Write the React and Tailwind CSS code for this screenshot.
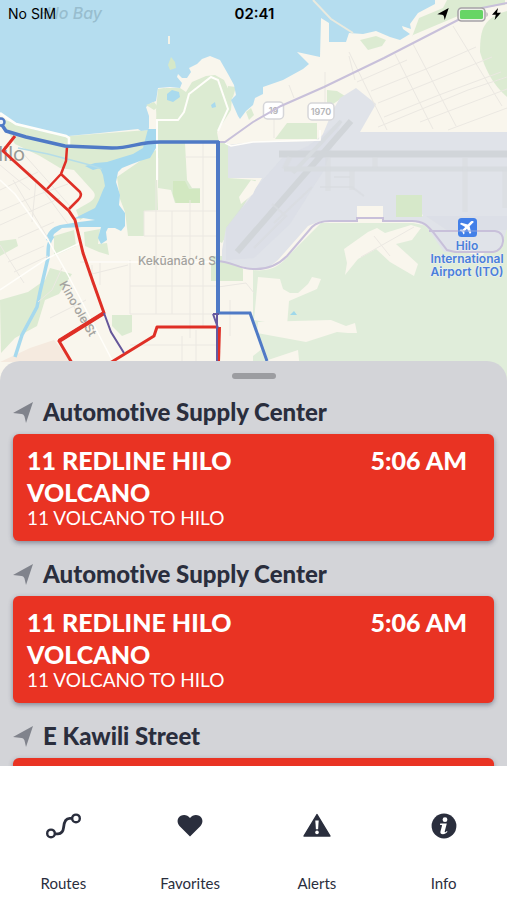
import React, { useState } from "react";

const STOPS = [
  {
    id: 1,
    stop: "Automotive Supply Center",
    route: "11 REDLINE HILO VOLCANO",
    headsign: "11 VOLCANO TO HILO",
    time: "5:06 AM",
  },
  {
    id: 2,
    stop: "Automotive Supply Center",
    route: "11 REDLINE HILO VOLCANO",
    headsign: "11 VOLCANO TO HILO",
    time: "5:06 AM",
  },
  {
    id: 3,
    stop: "E Kawili Street",
    route: "11 REDLINE HILO VOLCANO",
    headsign: "11 VOLCANO TO HILO",
    time: "5:08 AM",
  },
];

const ArrowIcon = ({ className }) => (
  <svg className={className} viewBox="0 0 20 21" fill="currentColor" aria-hidden="true">
    <path d="M20 0L0 11l8.500 1c1.500.2 2.700 1.200 3 2.600L13 21z" />
  </svg>
);

const RoutesIcon = () => (
  <svg width="36" height="32" viewBox="0 0 36 32" fill="none" stroke="currentColor" strokeWidth="2.4">
    <circle cx="6" cy="23.4" r="3.8" />
    <circle cx="31" cy="8.4" r="3.8" />
    <path d="M9.800 23.800h3.200c4.200 0 5.200-2.600 5.600-6.400.5-5.400 1.800-9 6-9h2.600" strokeWidth="2.800" />
  </svg>
);

const HeartIcon = () => (
  <svg width="26" height="32" viewBox="0 0 26 32" fill="currentColor">
    <path d="M13 26.400L2.500 16C-.6 12.500.2 7.400 3.800 5.700 7 4.200 10.700 4.900 13 8c2.300-3.100 6-3.800 9.200-2.300 3.600 1.700 4.400 6.800 1.300 10.300z" />
  </svg>
);

const AlertIcon = () => (
  <svg width="28" height="32" viewBox="0 0 28 32">
    <path d="M14 4.600L27 26H1z" fill="currentColor" stroke="currentColor" strokeWidth="1.400" strokeLinejoin="round" />
    <path d="M12.300 10.400h3.400l-.6 8.900h-2.200z" fill="#fff" />
    <circle cx="14" cy="22.400" r="1.800" fill="#fff" />
  </svg>
);

const InfoIcon = () => (
  <svg width="26" height="32" viewBox="0 0 26 32">
    <circle cx="13" cy="16" r="12.400" fill="currentColor" />
    <circle cx="14" cy="9.700" r="2.400" fill="#fff" />
    <path d="M9.200 13.400h6.600l-2.100 8c-.2.900.5.900 1.100.5l1-.8.700.7c-1.200 1.400-2.900 2.400-4.600 2.400-2 0-2.900-1.100-2.400-2.900l1.500-5.600c.1-.6-.1-.8-.7-.8H9z" fill="#fff" />
  </svg>
);

const TABS = [
  { label: "Routes", icon: <RoutesIcon /> },
  { label: "Favorites", icon: <HeartIcon /> },
  { label: "Alerts", icon: <AlertIcon /> },
  { label: "Info", icon: <InfoIcon /> },
];

const MapView = () => (
  <svg
    className="block h-full w-full"
    viewBox="0 0 507 381"
    preserveAspectRatio="xMidYMin slice"
    role="img"
    aria-label="Map of Hilo"
    fontFamily='Inter, "Liberation Sans", sans-serif'
  >
    <rect width="507" height="381" fill="#f9f6ed" />

    {/* Parks and forest */}
    <g fill="#dcebd2">
      <path d="M0 118l16 6 52 12 80-6v20l-43 15 7 25-12 18-20 12-4-10 14-8c6-4 6-8 2-12l-18-20-14-2-20-12-25-12z" />
      <path d="M156 150l2 60-14 1v25l-16 0-3-24-5-13-3-22z" />
      <path d="M156 120l1-10 9-22h14l6 4 6-10 14-6 9-1 9 5 8 17-1 13-14 22 2 11h-62z" />
      <path d="M158 143h27l2 37 5 8h8v15h-25l-4-13-13-2z" />
      <path d="M220 143h8l0 35 28 2-8 18-26 45-2-1z" />
      <path d="M228 86l8 1-3 10-5 5z" />
      <path d="M246 112l5-4 3 7-5 5z" />
      <path d="M412 37l7-19 24-10 4-8h32l26 0v5l-28 3-38 16-26 11z" />
      <path d="M480 52c0-24 4-34 27-41v86c-14-12-22-28-27-45z" />
      <path d="M287 123h30v16h-42z" />
      <path d="M327 90l10 1 8 5-18 12z" />
      <path d="M360 40l16-4 10 4-4 6-14 4z" />
      <path d="M211 256h20l12 13v12h-32z" />
      <path d="M0 300l28-8 17-12 5-12 22 6-13 20-14 6-8 26-22 12-14 15z" />
      <path d="M0 241l16-2 2 7-18 10z" />
      <path d="M112 315h20v17l-10 4-10-10z" />
      <path d="M54 236l20-6 2 16-22 10z" />
      <path d="M84 232l16-3-2 15 9-1 2 12-10-3-14-6z" />
    </g>
    <path fill="#d2e8c1" d="M173 181h12l4 8h11v14h-24l-3-8z" />
    <path fill="#f5eadf" d="M0 362l30-14 24-8 18 22z" />

    {/* Forest south of the airport */}
    <path
      fill="#e0edda"
      d="M253 270c18 2 27-4 36-15l32-32h92l25 5 24 24 20 4 25-30v155H253v-25l10-8-10-23z"
    />
    <g fill="#f9f6ed">
      <path d="M258 277l22 2 3 10 7 4 8 0 10-9 4-7 9 2-4 10-28 12-2 25-33-6z" />
      <path d="M258 322l73-2 15 6 9-3 2 10-9 0-11-1-31 10-49-9z" />
      <path d="M265 361l33-11 2 20h-40z" />
      <path d="M344 249l24-17 9-4 8 5 26-8 10 3-9 12-16 4 22 20-4 12-24-14-14-13-18 10-13 16 2-12z" />
    </g>
    <path fill="#9fd8ea" d="M290 315l4-4 3 4z" />

    {/* Airport */}
    <path
      fill="#e0e3e9"
      d="M228 145L253 142L320 141L333 110L340 98L356 88L376 104L360 132H507V228L502 246L495 252H444L426 226L413 221H320L308 226L278 260L268 268L253 269L222 261V250L226 228L250 198L262 178H228Z"
    />
    <path fill="#d8dce6" fillOpacity=".5" d="M226 228l28-38 28-32 26-12 34-26-18 50-34 54-36 34-28 2zM426 216h81v14h-60z" />
    <path fill="#f9f6ed" d="M239 197l12-17 7 2-5 12-12 10zM357 206h26v16h-26zM418 215l3-3 2 4z" />
    <path fill="#d6e8c9" d="M396 195h26v22h-26z" />
    <g stroke="#d1d5d9" fill="none">
      <path d="M279 154h228" strokeWidth="7" />
      <path d="M351 121L237 252" strokeWidth="6" />
      <g stroke="#d8dce0">
        <path d="M284 169h223" strokeWidth="5" />
        <path d="M341 121l-48 52" strokeWidth="4" />
        <path d="M375 157v11M465 158v54M505 170v38M290 157l-6 12M328 157v34M352 170v20" strokeWidth="5" strokeOpacity=".6" />
        <path d="M334 177h16M320 187h32l12 9M312 187l-38 36M272 204l14 12-32 32" strokeWidth="2" strokeOpacity=".7" />
      </g>
    </g>

    {/* Ocean */}
    <path
      fill="#b5ddef"
      d="M0 0v114l16 10 19 6 33 6 32-3 38-4 3 2 7-1 1-2v-12l-3-9 5-4 5-2 2-13 12-1 10 1 2-5-5-6 1-3 4 4h5l4-6-2-4 8-4 5-5 8-3 10 4 8 14 6 11 2 10-5 5 7 16 2 3 6-8 7-6 2-7 8-4v-7l20-7 20-11 6-5-12-12 23 5 1-39 8 5v19h17l3-9 14 1 13-3 14 6 10 3 10-6-7-5-1-3 9 3-1-5 8-11 17-9V0z"
    />
    <path fill="#f5f3e8" d="M168 36h2v8h-2z" />
    <path fill="#d5e8c8" d="M171 57l4 5 1 6-6 2-2-5z" />
    <g fill="#dcebd2">
      <path d="M158 89l6-1 16 2 4 10-5 19h-22l-1-9z" />
      <path d="M146 105l8-3 4 5-4 3z" />
    </g>
    <g fill="#a9daee">
      <path d="M167 94l5-4 7 2 1 5-7 5-6-2zM211 105l4-3 1 5-4 1z" />
    </g>

    {/* Wailoa river and pond */}
    <path
      fill="#a6d9ee"
      d="M148 129h8v19l-6 10-10 3-8 3-10 4-4 4-2 10 4 13-1 10 6 8v13l-4 5-6-3-7 0-2 4 1 8-6 4-3-6 3-11-19 0-20 1-8 6-3 8-5-2c1-8 6-13 14-15l19-3 16-2-12-2-10 1 12-6 10-5 4-8 4-10 2-4-2-11-3-7-7 2-8-4 10-3 12-1 16-5 10-3 10-6z"
    />
    <path
      d="M53 236c-5 6-5 12-5 22l-8 34-3 15-15 28-7 22"
      fill="none"
      stroke="#a6d9ee"
      strokeWidth="3.500"
    />
    <path d="M18 148l30 6 42 11 12 4" fill="none" stroke="#b5dde8" strokeWidth="1.500" />

    {/* Local streets */}
    <g fill="none" stroke="#ebe8e2" strokeWidth="1">
      <path d="M144 211h74M144 236h74M130 286h88M130 314h88M156 180v134M172 211v103M190 200v138M203 143v184M130 260v54M158 158v22M185 157h33M144 211v25" />
      <path d="M349 52l38 78M395 54l38 75M413 44l43 82M453 26l49 80M371 91l55-22 50-22M357 82l50-22M378 103l60-24 54-22M384 117l55-22 62-23M420 122l87-33M378 127l90-37 39-13M448 130l59-22M289 85l5 13M325 72v42M349 56l6 24M274 116v22" />
      <path d="M0 211l40-17 28-10M0 225l60-27M13 180l36 60M28 170l40 54M36 180l-4 42M0 190l38-18M18 238l36-16M80 262h48M88 275l40-10M92 285v-20M100 285v-22M52 290l-14 12M62 268l-10 22M20 150l50 56M0 165l30 25" />
      <path d="M0 245l24 38M8 262l36-16M14 272l34-16M70 300l20 34M50 318l36-18M130 345h88M182 336v30M196 330v32M230 300v36M218 287l28-4 8 10M361 257l53-30M374 236l16 20" />
    </g>
    <g fill="none" stroke="#fffefa" strokeWidth="2">
      <path d="M0 113l16 11 50 12 3 2v8" strokeWidth="2.500" />
      <path d="M157 180v-60h21l6-8 5-18 22-17 7 3 10 29-10 22" />
      <path d="M0 290l48-32 32-15M85 262h133M225 143l6 3 22-4 67-2v-10" strokeWidth="1.500" />
      <path d="M0 180l15 14 33 46 20 35 45 87" strokeWidth="1.500" />
    </g>
    <path d="M313 0l18 19 22 14" fill="none" stroke="#e9eadf" strokeWidth="2" />

    {/* Highway shields */}
    <g fill="#fff" stroke="#d6d6d9" strokeWidth="1.500">
      <rect x="263.500" y="102" width="20" height="17" rx="4" />
      <rect x="308" y="103" width="26" height="17" rx="4" />
    </g>
    <g fontSize="9" fontWeight="600" textAnchor="middle" fill="#b4b4b7">
      <text x="273.500" y="114">19</text>
      <text x="321" y="115">1970</text>
    </g>

    {/* Highways */}
    <g fill="none" stroke="#c8c0da" strokeWidth="2">
      <path d="M218 142h7l28-20 28-16 43-19 60-29 72-37 26-13 25-5" />
      <path d="M218 261c14 1 22 8 35 8 16 1 26-5 34-13l25-29c5-5 11-6 18-6h27v-3h26v3h29c11 0 15 4 21 11l14 18 8 2h38c12-1 14-20 2-21h-66" />
    </g>

    {/* Map labels */}
    <text x="102" y="19" fontSize="16" fontStyle="italic" fontWeight="500" textAnchor="end" fill="#98bdce">
      Hilo Bay
    </text>
    <text x="25" y="161" fontSize="20" textAnchor="end" fill="#979a97">
      Hilo
    </text>
    <g fontSize="12" fontWeight="500" fill="#a3a29e">
      <text x="138" y="265">Kekūanāoʻa S</text>
      <text transform="translate(59 284) rotate(60)">Kinoʻole St</text>
    </g>

    {/* Bus lines */}
    <g fill="none" stroke="#df2f26" strokeWidth="3" strokeLinejoin="round">
      <path d="M15 136L3 151l66 60 6 9 8 33 10 29 11 31-45 28 13 22" />
      <path d="M104 313l-45 28" strokeWidth="4" />
      <path d="M67 147l-1 14-5 13-14 15M61 174l19 18c2 3 0 6-2 8l-9 9" strokeWidth="2.500" />
      <path d="M110 363l44-27 3-9h61" />
      <path d="M219 327l-1 35" strokeWidth="4" />
    </g>
    <path d="M104 313l7 19 13 21" fill="none" stroke="#65569a" strokeWidth="2" />
    <g fill="none" stroke="#4f7ac6" strokeWidth="3">
      <path d="M2 125l4 6 20 6 39 9 47 2c20 0 26-6 48-6h59" strokeWidth="3.500" strokeLinejoin="round" />
      <circle cx="1" cy="122" r="3.500" fill="#eef2f8" strokeWidth="2.500" />
      <path d="M218 141v173" strokeWidth="4" />
      <path d="M218 313h32l17 48" />
      <path d="M213 314l5 14M213 314h6M217 314v52" stroke="#66599f" strokeWidth="2" />
    </g>

    {/* Airport marker */}
    <rect x="458" y="218" width="19" height="19" rx="3.500" fill="#4380e8" />
    <path
      d="M473.500 221.500c-1-1-2.600-.2-3.500.7l-2.200 2.200-6.600-1.600-1.300 1.300 5.300 2.900-2.600 2.700-2-.2-1 1 2.700 1.200 1.200 2.700 1-1-.2-2 2.700-2.600 2.900 5.300 1.300-1.300-1.600-6.600 2.200-2.200c.9-.9 2.400-1.700 1.700-2.500z"
      fill="#fff"
    />
    <path d="M458 231h19" stroke="#8b9fe0" strokeWidth="1.500" strokeOpacity=".7" />
    <g fontSize="12" fontWeight="600" textAnchor="middle" fill="#4a80da" stroke="#eef0f4" strokeWidth="1" paintOrder="stroke">
      <text x="467" y="250">Hilo</text>
      <text x="467" y="263">International</text>
      <text x="467" y="276">Airport (ITO)</text>
    </g>
  </svg>
);

const StatusBar = () => (
  <div className="absolute inset-x-0 top-0 grid h-7 grid-cols-3 items-center pr-1.5 pl-2 font-['Inter','Liberation_Sans',sans-serif] text-sm text-black">
    <span>No SIM</span>
    <span className="text-center text-[15px] font-semibold">02:41</span>
    <span className="flex items-center justify-end gap-1">
      <ArrowIcon className="mr-1 h-3 w-3" />
      <svg width="31" height="15" viewBox="0 0 31 15" aria-label="Battery charging">
        <rect x="1" y="1" width="27" height="13" rx="3.500" fill="#eef0ea" stroke="#a7a2a8" strokeWidth="1.500" />
        <rect x="3" y="3" width="23" height="9" rx="1.500" fill="#67d565" />
        <path d="M29.500 5c1.500 1 1.500 4 0 5z" fill="#a7a2a8" />
      </svg>
      <svg width="9" height="12" viewBox="0 0 9 12" aria-hidden="true">
        <path d="M6 0L0 6.800h3.800L2.600 12 9 4.800H5z" />
      </svg>
    </span>
  </div>
);

const StopItem = ({ item }) => (
  <li>
    <h2 className="mb-2 flex items-center gap-2.5 text-[24px] leading-7 font-black text-[#2a2e3d] [font-variant-ligatures:none]">
      <ArrowIcon className="h-[21px] w-5 text-[#80838c]" />
      {item.stop}
    </h2>
    <button
      type="button"
      className="block w-full rounded-md bg-[#e93323] pt-2.5 pr-[27px] pb-[13px] pl-3.5 text-left text-white shadow-[0_2px_5px_rgba(40,45,70,0.45)]"
    >
      <span className="flex justify-between text-[25px] leading-8 font-black">
        <span className="w-3/5">{item.route}</span>
        <span>{item.time}</span>
      </span>
      <span className="block text-[19px] leading-5">{item.headsign}</span>
    </button>
  </li>
);

const App = () => {
  const [activeTab, setActiveTab] = useState("Routes");

  return (
    <div className="flex h-screen flex-col overflow-hidden bg-white font-['Lato','Open_Sans',sans-serif]">
      <div className="relative h-[381px] shrink-0">
        <MapView />
        <StatusBar />
      </div>

      {/* Bottom sheet with nearby stops */}
      <main className="relative -mt-5 flex min-h-0 flex-1 flex-col rounded-t-[20px] bg-[#d3d4d8] pt-3">
        <div className="mx-auto mb-[19px] h-1.5 w-11 shrink-0 rounded-full bg-[#9c9da1]" />
        <ul className="flex min-h-0 flex-1 flex-col gap-[19px] overflow-y-auto px-[13px] [scrollbar-width:none]">
          {STOPS.map((item) => (
            <StopItem key={item.id} item={item} />
          ))}
        </ul>
      </main>

      <nav className="grid shrink-0 grid-cols-4 bg-white text-[#2a2e3d]">
        {TABS.map(({ label, icon }) => (
          <button
            key={label}
            type="button"
            aria-current={activeTab === label ? "page" : undefined}
            onClick={() => setActiveTab(label)}
            className="flex flex-col items-center gap-8 pt-11 pb-2 text-[15px] leading-[18px]"
          >
            {icon}
            {label}
          </button>
        ))}
      </nav>
    </div>
  );
};

export default App;
